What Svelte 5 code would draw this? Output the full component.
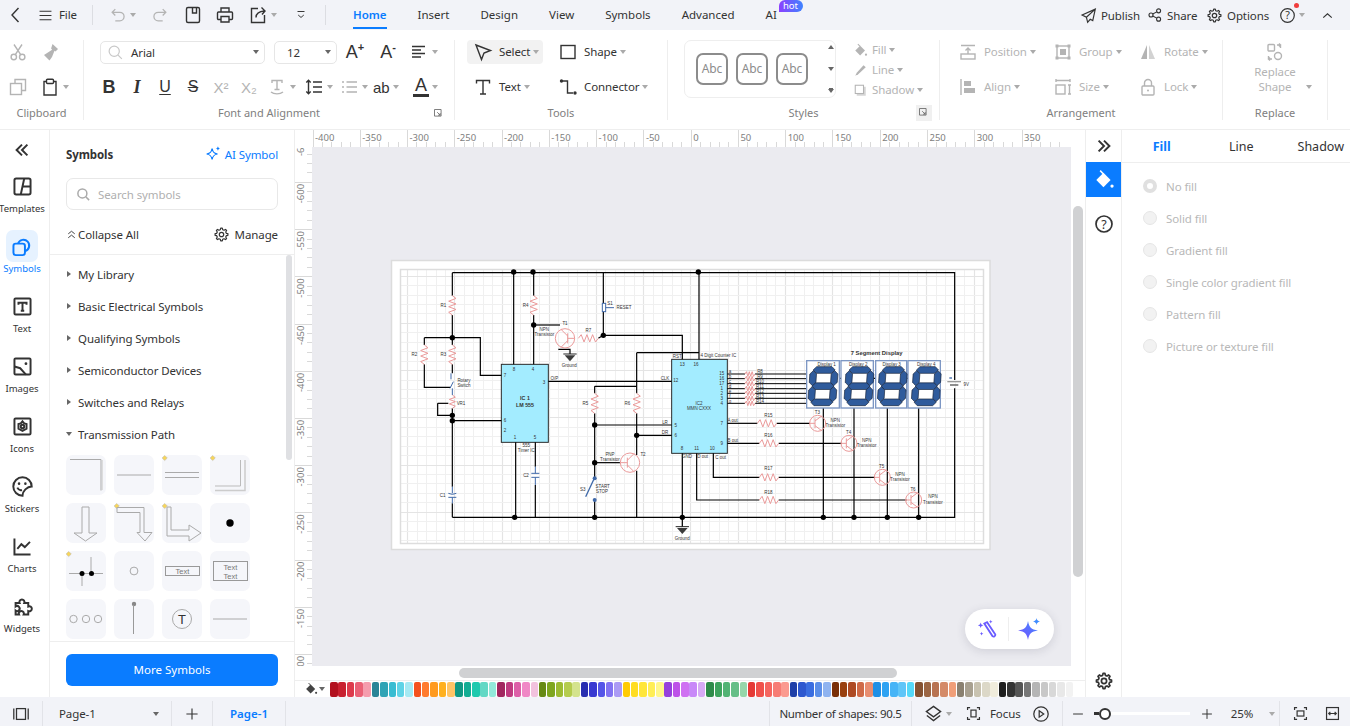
<script>
  function gearPath(R = 7.6, r = 5.8, n = 8) {
    const pts = [];
    for (let i = 0; i < n; i++) {
      const a = (i / n) * Math.PI * 2;
      const w = Math.PI / n;
      for (const [rad, off] of [[r, -w * 0.62], [R, -w * 0.32], [R, w * 0.32], [r, w * 0.62]]) {
        pts.push((10 + rad * Math.cos(a + off)).toFixed(2) + ' ' + (10 + rad * Math.sin(a + off)).toFixed(2));
      }
    }
    return 'M' + pts.join('L') + 'Z';
  }
  const gearIcon = `<path d="${gearPath()}" stroke-linejoin="round"/><circle cx="10" cy="10" r="2.6"/>`;
  const F = 'fill="currentColor" stroke="none"';

  const I = {
    back: '<path d="M12.5 3 6 10l6.5 7"/>',
    menu: '<path d="M3 5h14M3 10h14M3 15h14"/>',
    undo: '<path d="M7 3.5 3.5 7 7 10.5M3.5 7H12a4.7 4.7 0 0 1 0 9.5H7"/>',
    redo: '<path d="M13 3.5 16.5 7 13 10.5M16.5 7H8a4.7 4.7 0 0 0 0 9.5h5"/>',
    save: '<path d="M5 2.5h10A1.5 1.5 0 0 1 16.500 4v12a1.500 1.500 0 0 1-1.500 1.500H5A1.500 1.500 0 0 1 3.500 16V4A1.500 1.500 0 0 1 5 2.500z"/><path d="M9.500 2.500v5.500h4V2.500"/>',
    print: '<path d="M6 7V3h8v4M6 14.500H3.500a1 1 0 0 1-1-1V8a1 1 0 0 1 1-1h13a1 1 0 0 1 1 1v5.500a1 1 0 0 1-1 1H14M6 11.500h8V17H6z"/>',
    export: '<path d="M10 3.500H3.500v14h13V10"/><path d="M8 12.500C8 8.500 10.500 6.500 16.500 6M13.500 2.500l3.500 3.500-3 3.500"/>',
    fold: '<path d="M5 5h10M6 10l4 3.500 4-3.500"/>',
    publish: '<path d="M18 2.500 2.500 9.500l5 2.500 1.500 6 3-3.500 3 1.500zM18 2.500 7.500 12"/>',
    share: '<circle cx="5" cy="10" r="2.500"/><circle cx="14.500" cy="4.800" r="2.500"/><circle cx="14.500" cy="15.200" r="2.500"/><path d="M7.200 8.800l5-2.700M7.200 11.200l5 2.700"/>',
    gear: gearIcon,
    help: `<circle cx="10" cy="10" r="8"/><text x="10" y="14.500" text-anchor="middle" font-size="12.500" ${F}>?</text>`,
    up: '<path d="M5 12.500 10 8l5 4.500"/>',
    cut: '<circle cx="5.800" cy="15" r="2.700"/><circle cx="14.200" cy="15" r="2.700"/><path d="M7.300 12.700 14 2.500M12.700 12.700 6 2.500"/>',
    painter: `<path ${F} d="M12.500 2l5.500 5-2.500 2.500-1-.8L12 15l-2.500 3.500L4 13l3.500-2.200 4.600-3-1-1.200z"/>`,
    copy: '<path d="M7 6V2.500h10.500v11H14"/><rect x="2.500" y="6.500" width="11" height="11"/>',
    paste: '<path d="M6.500 4.500H4v13.500h12V4.500h-2.500"/><rect x="6.500" y="2.300" width="7" height="4.200" rx="1"/>',
    search: '<circle cx="8.500" cy="8.500" r="6"/><path d="M13 13l4.500 4.500"/>',
    align: '<path d="M3 4.500h13M3 8h9M3 11.500h13M3 15h9"/>',
    tt: '<path d="M5 6V3.500h10V6M10 3.500v9M7.500 12.500h5M4 15c3 2.500 9 2.500 12 0"/>',
    spacing: '<path d="M4.500 3.500v13M2.300 5.500l2.200-2.200 2.200 2.200M2.300 14.500l2.200 2.200 2.200-2.200M9 5h9M9 10h9M9 15h9" />',
    list: '<path d="M3 5h2M3 10h2M3 15h2M7.500 5H18M7.500 10H18M7.500 15H18"/>',
    arrow: '<path d="M3 3l14.500 5.500-6.500 2.500-2.500 6.500z"/>',
    rect: '<rect x="3" y="3.500" width="14" height="13"/>',
    textT: '<path d="M3.500 6.500V3.500h13v3M10 3.500v13.500M7 17h6"/>',
    conn: `<circle cx="3.500" cy="4" r="1.700" ${F}/><circle cx="17" cy="16" r="1.700" ${F}/><path d="M5 4h4.500v12H15"/>`,
    launcher: '<path d="M2.500 2.500h11v11h-11z"/><path d="M7 7l5 5M12 8.500V12H8.500"/>',
    bucket: `<path d="M3 10 9.500 3.500 16 10 9.500 16.500z" ${F}/><path d="M6.500 1.500l3 3"/><circle cx="17.300" cy="15.500" r="1.500" ${F}/>`,
    pencil: `<path d="M3 17l2-4L14 3l3 2.500L7 15z" ${F}/>`,
    shadow: `<rect x="5" y="5" width="12" height="12" ${F} opacity=".55"/><rect x="3" y="3" width="11" height="11" fill="#fff"/>`,
    position: `<path d="M3 3.500h14M10 12V6M7.500 8.500 10 6l2.500 2.500"/><rect x="3" y="12" width="14" height="5"/>`,
    group: `<rect x="4" y="4" width="12" height="12"/><rect x="2.500" y="2.500" width="3" height="3" ${F}/><rect x="14.500" y="2.500" width="3" height="3" ${F}/><rect x="2.500" y="14.500" width="3" height="3" ${F}/><rect x="14.500" y="14.500" width="3" height="3" ${F}/><rect x="7" y="7" width="6" height="6" ${F}/>`,
    rotate: `<path d="M9 3v14H3z" ${F}/><path d="M11 3v14h6z" ${F} opacity=".6"/>`,
    alignL: `<path d="M3 2v16"/><rect x="6" y="4" width="7" height="5" ${F}/><rect x="6" y="11" width="11" height="5" ${F}/>`,
    size: '<path d="M3 3.500h14M3 2v3M17 2v3"/><rect x="3" y="8" width="9" height="9"/><path d="M15 8h3M15 17h3M16.500 8v9"/>',
    lock: `<rect x="4" y="9" width="12" height="9" rx="1"/><path d="M6.500 9V6a3.500 3.500 0 0 1 7 0v3"/><circle cx="10" cy="13.500" r="1" ${F}/>`,
    replace: '<rect x="3" y="2.500" width="6.500" height="6.500" rx="1"/><circle cx="13" cy="14" r="3.500"/><path d="M12 3h3.500v3M14 1.500l1.500 1.500-1.500 1.500M7 17H3.500v-3M5 18.500 3.500 17 5 15.500"/>',
    templates: '<rect x="3" y="3" width="14" height="14" rx="1.500"/><path d="M11.500 3 8.500 17M10 10h7"/>',
    symbols: '<rect x="3" y="7.500" width="10" height="10" rx="2"/><path d="M7 7.500a5 5 0 1 1 6 6.500"/>',
    textBox: `<rect x="3" y="3" width="14" height="14" rx="1"/><path d="M6.500 8.500V6.700h7v1.800M10 6.700v7M8.500 13.700h3"/>`,
    images: `<rect x="3" y="3" width="14" height="14" rx="1"/><path d="M3 10l5 1.500 5 5.500"/><circle cx="13" cy="7.500" r="1.200" ${F}/>`,
    iconsI: '<rect x="3" y="3" width="14" height="14" rx="1"/><path d="M10 5.500l1.500 1.800 2 .5v4l-3.500 2-3.500-2v-4l2-.5z"/><circle cx="10" cy="10" r="1.500"/>',
    stickers: `<path d="M18 10a8 8 0 1 0-8 8c0-4 4-8 8-8z"/><path d="M5.500 11c1 2 2.500 2.500 4 2"/><circle cx="7" cy="7.500" r="1.100" ${F}/><circle cx="12.500" cy="7.500" r="1.100" ${F}/>`,
    charts: '<path d="M3 3v14h14M5.500 12l3.500-4 3 2.500 4.500-4.500"/>',
    widgets: '<path d="M4 7h3.500a2.200 2.200 0 1 1 4 0H15v3a2.200 2.200 0 1 1 0 4v3h-4a2.200 2.200 0 1 0-4 0H4v-3.500a2.200 2.200 0 1 0 0-3.500z"/>',
    dbl: '<path d="M10 4 4 10l6 6M16 4l-6 6 6 6"/>',
    dblR: '<path d="M4 4l6 6-6 6M10 4l6 6-6 6"/>',
    dblUp: '<path d="M5 9l5-4 5 4M5 15l5-4 5 4"/>',
    aiStar: `<path d="M9 4c.8 4 2 5.200 6 6-4 .8-5.200 2-6 6-.8-4-2-5.200-6-6 4-.8 5.200-2 6-6z"/><path d="M15.500 1.500c.3 1.500.8 2 2.500 2.500-1.700.500-2.200 1-2.500 2.500-.3-1.500-.8-2-2.500-2.500 1.700-.5 2.200-1 2.500-2.500z" ${F}/>`,
    sidebar: '<path d="M2 4v12M18 4v12"/><rect x="5" y="4" width="10" height="12"/>',
    plus: '<path d="M3 10h14M10 3v14"/>',
    layers: '<path d="M10 2.500 17.500 8 10 13.500 2.500 8zM3 12l7 5.500 7-5.500"/>',
    focus: '<path d="M3 6V3h3M14 3h3v3M17 14v3h-3M6 17H3v-3"/><rect x="7" y="6" width="6" height="8"/>',
    play: '<circle cx="10" cy="10" r="8"/><path d="M8 6.500 13 10l-5 3.500z"/>',
    minus: '<path d="M3 10h14"/>',
    fit: '<path d="M3 6V3h3M14 3h3v3M17 14v3h-3M6 17H3v-3"/><rect x="6" y="7" width="8" height="6"/>',
    width: '<rect x="3" y="3" width="14" height="14"/><path d="M6 10h8M7.500 8 5.500 10l2 2M12.500 8l2 2-2 2"/>'
  };

  const topLeft = [
    { icon: 'back', w: 31, size: 20, cls: 'dark' },
    { icon: 'menu', w: 28, size: 17, cls: 'dark' },
    { label: 'File', w: 33, pl: 0, cls: 'dark' }
  ];
  const topMid = [
    { icon: 'undo', w: 52, pl: 16, caret: true, size: 18, cls: 'mute' },
    { icon: 'redo', w: 30, size: 18, cls: 'mute' },
    { icon: 'save', w: 36, size: 20, cls: 'dark' },
    { icon: 'print', w: 28, size: 20, cls: 'dark' },
    { icon: 'export', w: 42, pl: 9, caret: true, size: 20, cls: 'dark' },
    { icon: 'fold', w: 39, size: 14, cls: 'dark' }
  ];
  const tabs = ['Home', 'Insert', 'Design', 'View', 'Symbols', 'Advanced', 'AI'];

  const clip1 = [
    { icon: 'cut', w: 32, cls: 'mute' },
    { icon: 'painter', w: 32, cls: 'mute' }
  ];
  const clip2 = [
    { icon: 'copy', w: 32, cls: 'mute' },
    { icon: 'paste', w: 38, pl: 6, caret: true, cls: 'dark' }
  ];
  const font1 = [
    { txt: 'A', sup: '+', w: 36, txtCls: 'big', cls: 'dark' },
    { txt: 'A', sup: '-', w: 30, txtCls: 'big', cls: 'dark' },
    { icon: 'align', w: 40, pl: 6, caret: true, cls: 'dark' }
  ];
  const font2 = [
    { txt: 'B', w: 28, txtCls: 'big bold', cls: 'dark' },
    { txt: 'I', w: 28, txtCls: 'big ital', cls: 'dark' },
    { txt: 'U', w: 28, txtCls: 'big under', cls: 'dark' },
    { txt: 'S', w: 28, txtCls: 'big strike', cls: 'dark' },
    { txt: 'X²', w: 28, txtCls: 'mid', cls: 'mute' },
    { txt: 'X₂', w: 28, txtCls: 'mid', cls: 'mute' },
    { icon: 'tt', w: 34, pl: 4, caret: true, cls: 'mute' },
    { icon: 'spacing', w: 36, pl: 7, caret: true, cls: 'dark' },
    { icon: 'list', w: 33, pl: 6, caret: true, cls: 'mute' },
    { txt: 'ab', w: 37, pl: 7, caret: true, txtCls: 'mid', cls: 'dark' },
    { txt: 'A', w: 40, pl: 10, caret: true, txtCls: 'big bar', cls: 'dark' }
  ];
  const tools1 = [
    { icon: 'arrow', label: 'Select', w: 76, pl: 6, caret: true, cls: 'dark sel' },
    { icon: 'rect', label: 'Shape', w: 96, pl: 6, caret: true, cls: 'dark gapl' }
  ];
  const tools2 = [
    { icon: 'textT', label: 'Text', w: 76, pl: 6, caret: true, cls: 'dark' },
    { icon: 'conn', label: 'Connector', w: 108, pl: 6, caret: true, cls: 'dark gapl' }
  ];
  const styleCol = [
    { icon: 'bucket', label: 'Fill', size: 15 },
    { icon: 'pencil', label: 'Line', size: 15 },
    { icon: 'shadow', label: 'Shadow', size: 15 }
  ];
  const arr1 = [
    { icon: 'position', label: 'Position', w: 95, pl: 0, caret: true, cls: 'mute' },
    { icon: 'group', label: 'Group', w: 85, pl: 0, caret: true, cls: 'mute' },
    { icon: 'rotate', label: 'Rotate', w: 85, pl: 0, caret: true, cls: 'mute' }
  ];
  const arr2 = [
    { icon: 'alignL', label: 'Align', w: 95, pl: 0, caret: true, cls: 'mute' },
    { icon: 'size', label: 'Size', w: 85, pl: 0, caret: true, cls: 'mute' },
    { icon: 'lock', label: 'Lock', w: 85, pl: 0, caret: true, cls: 'mute' }
  ];

  const rail = [
    ['templates', 'Templates'], ['symbols', 'Symbols'], ['textBox', 'Text'], ['images', 'Images'],
    ['iconsI', 'Icons'], ['stickers', 'Stickers'], ['charts', 'Charts'], ['widgets', 'Widgets']
  ];
  const libs = ['My Library', 'Basic Electrical Symbols', 'Qualifying Symbols', 'Semiconductor Devices', 'Switches and Relays'];

  const D = (x = 2.7, y = 3) => `<path d="M${x} ${y - 2.6}L${x + 2.6} ${y}L${x} ${y + 2.6}L${x - 2.6} ${y}z" fill="#f6d55c" stroke="#b5b5b5" stroke-width=".5"/>`;
  const tiles = [
    '<path d="M4 4.500h31v31" stroke="#aaa"/><path d="M36.500 5v30" stroke="#ddd"/>',
    '<path d="M3 20h34" stroke="#aaa"/>',
    D() + '<path d="M3 17.500h34M3 22.500h34" stroke="#aaa"/>',
    D() + '<path d="M5 35.500h30V5" stroke="#ccc" stroke-width="1.500"/><path d="M5 31h25.500V5" stroke="#bbb"/>',
    '<path d="M16 4h7v26h8L19.500 38 8 30h8z" stroke="#aaa"/>',
    D() + '<path d="M3 4.500h27v25h8L31 38 23 29.500h3V9.500H3z" stroke="#aaa"/>',
    D() + '<path d="M5 4h4v23h18v-5l12 8-12 8v-5H5z" stroke="#aaa"/>',
    '<circle cx="20" cy="20" r="3.700" fill="#000"/>',
    D() + '<path d="M3 22.500h34M25 6v17M16 22v13" stroke="#aaa"/><circle cx="16" cy="22.500" r="2.500" fill="#000"/><circle cx="25.500" cy="22.500" r="2.500" fill="#000"/>',
    '<circle cx="20" cy="20" r="3.900" stroke="#aaa"/>',
    '<rect x="3.500" y="15.500" width="34" height="9" stroke="#999"/><text x="20.500" y="23" text-anchor="middle" font-size="7.500" fill="#777">Text</text>',
    '<rect x="3.500" y="10.500" width="34" height="19" stroke="#999"/><text x="20.500" y="18.500" text-anchor="middle" font-size="7.500" fill="#777">Text</text><text x="20.500" y="27.500" text-anchor="middle" font-size="7.500" fill="#777">Text</text>',
    '<circle cx="7.500" cy="20" r="3.700" stroke="#aaa"/><circle cx="20" cy="20" r="3.700" stroke="#aaa"/><circle cx="32" cy="20" r="3.700" stroke="#aaa"/>',
    '<circle cx="20" cy="5" r="2.200" fill="#888"/><path d="M19.500 6v29" stroke="#999"/>',
    '<circle cx="20" cy="20" r="9.500" stroke="#aaa"/><text x="20" y="25" text-anchor="middle" font-size="13" fill="#333">T</text>',
    '<path d="M3 20h34" stroke="#aaa"/>'
  ];

  const radios = ['No fill', 'Solid fill', 'Gradient fill', 'Single color gradient fill', 'Pattern fill', 'Picture or texture fill'];

  const colors = [
    '#b2101e','#c8202f','#dd3a4c','#ea6176','#f59cad',
    '#2a8497','#2fa3b5','#38bcd2','#5fd3e6','#a5e9f3',
    '#f4511e','#ff7a2e','#ff9a1f','#ffb01f','#ffc466',
    '#0f9883','#12ad94','#1ec9ae','#62d8c5','#93e8da',
    '#a1265f','#bf3a80','#dd5fa8','#f088c6','#f2c2de',
    '#678a14','#7fa61f','#9dbb32','#b5cc4e','#d4e38d',
    '#282db0','#3838d1','#5454e8','#8272f2','#ab9af5',
    '#ffcb05','#ffdd22','#ffe63a','#ffee55','#fff78a',
    '#9640dc','#bd52e8','#cf70f2','#c888f8','#d6aaf5',
    '#2e8b4a','#3ea35e','#52b374','#66bf88','#96d6aa',
    '#e53935','#f0504a','#f5655f','#f77c75','#fb9a90',
    '#1f3fa8','#2d57cf','#3a6de0','#5b8ee8','#8fb3f0',
    '#7a2f08','#99400f','#ae4a24','#cf6a48','#e88d70',
    '#1f8fe5','#2ea2f2','#46b4f7','#5fc5f8','#55d8f8',
    '#855232','#9c6644','#b87352','#d48a68','#f09e78',
    '#8a8070','#a8a090','#c8c2b0','#dcd8c8','#f0ecdc',
    '#1e1e1e','#333333','#555555','#777777','#b5b5b5','#c8c8c8','#d8d8d8','#e8e8e8','#f2f2f2','#ffffff'
  ];

  const TICK = 47.27;
  const topMajors = Array.from({ length: 16 }, (_, i) => ({ x: 0.5 + i * TICK, v: -400 + 50 * i }));
  const topMinors = [];
  for (let i = 0; i < 16; i++) for (let k = 1; k < 5; k++) topMinors.push(0.5 + i * TICK + k * TICK / 5);
  const leftMajors = Array.from({ length: 12 }, (_, i) => ({ y: -12.3 + i * 47.2, v: -650 + 50 * i }));
  const leftMinors = [];
  for (let i = 0; i < 12; i++) for (let k = 1; k < 5; k++) leftMinors.push(-12.3 + i * 47.2 + k * 47.2 / 5);

  /* page grid, in screen pixels */
  const GX0 = 400.5, GX1 = 983.5, GY0 = 269.5, GY1 = 543.5, G = 9.44;
  const vLines = [], hLines = [];
  for (let i = -1; i < 63; i++) {
    const x = 407.2 + i * G;
    if (x > GX0 && x < GX1) vLines.push({ p: Math.round(x) + 0.5, m: (i % 5 + 5) % 5 === 0 });
  }
  for (let i = -1; i < 30; i++) {
    const y = 275.7 + i * G;
    if (y > GY0 && y < GY1) hLines.push({ p: Math.round(y) + 0.5, m: (i % 5 + 5) % 5 === 0 });
  }

  /* circuit, drawn in a 3x space with its origin at (390,260) */
  const wires = [
    'M187 38H1694V360', 'M1694 385V772H187', 'M187 38V107', 'M187 165V233', 'M103 233H271V346H334', 'M103 233V255',
    'M103 313V382H182', 'M187 233V255', 'M187 313V340', 'M187 445V482', 'M143 430H175', 'M143 430V466H187', 'M187 482H334',
    'M187 482V680', 'M187 730V772', 'M371 38V313', 'M431 38V107', 'M431 165V313', 'M431 195H510', 'M377 547V772',
    'M436 547V620', 'M436 675V772', 'M505 268H540V282', 'M625 235L640 226', 'M640 38V130', 'M640 155V226H877V298',
    'M740 278H927', 'M927 38V298', 'M740 278V400', 'M740 460V585', 'M740 632V772', 'M614 379H740', 'M614 379V400',
    'M614 460V655', 'M614 720V772', 'M614 495H845', 'M740 526H845', 'M614 608H690', 'M475 364H845', 'M877 580V800',
    'M920 580V720H1108', 'M1166 720H1550', 'M970 580V652H1108', 'M1166 652H1455', 'M1012 490H1102', 'M1160 490H1260',
    'M1012 550H1108', 'M1166 550H1355', 'M1300 437V772', 'M1392 437V772', 'M1492 437V772', 'M1586 437V772',
    'M1345 355H1365', 'M1448 355H1467', 'M1548 355H1567'
  ];
  const dots = [
    [371,36],[429,36],[925,36],[187,233],[187,466],[187,482],[431,195],[640,226],[614,495],[614,608],[740,526],
    [374,772],[614,772],[877,772],[1300,772],[1392,772],[1492,772],[1586,772]
  ];
  const pinY = [342,356,371,386,400,415,430];

  function zigV(x, a, b, amp = 11, n = 6) {
    const s = (b - a) / (n + 1);
    let d = `M${x} ${a}`;
    for (let i = 1; i <= n; i++) d += `L${x + (i % 2 ? amp : -amp)} ${a + s * i}`;
    return d + `L${x} ${b}`;
  }
  function zigH(a, b, y, amp = 11, n = 6) {
    const s = (b - a) / (n + 1);
    let d = `M${a} ${y}`;
    for (let i = 1; i <= n; i++) d += `L${a + s * i} ${y + (i % 2 ? -amp : amp)}`;
    return d + `L${b} ${y}`;
  }
  const resistors = [
    zigV(187,107,165), zigV(431,107,165), zigV(103,255,313), zigV(187,255,313), zigV(187,405,445,9,5),
    zigV(614,400,460), zigV(740,400,460), zigH(565,625,235), zigH(1102,1160,490), zigH(1108,1166,550),
    zigH(1108,1166,652), zigH(1108,1166,720), ...pinY.map((y) => zigH(1065,1095,y,7))
  ];
  const transistors = [
    { x: 525, y: 235, r: 29, d: -1 }, { x: 720, y: 608, r: 29, d: 1 }, { x: 1283, y: 490, r: 24, d: 1 },
    { x: 1377, y: 550, r: 24, d: 1 }, { x: 1477, y: 652, r: 24, d: 1 }, { x: 1571, y: 720, r: 24, d: 1 }
  ];
  const grounds = [[540,282],[877,800]];

  const labels = [
    [160,137,'R1'],[407,137,'R4'],[73,284,'R2'],[160,284,'R3'],[222,363,'Rotary'],[222,378,'Switch'],[213,431,'VR1'],[158,707,'C1'],
    [372,329,'8'],[429,329,'4'],[345,347,'7'],[462,368,'3'],[345,482,'6'],[345,512,'2'],[375,534,'1'],[435,534,'5'],
    [409,557,'555'],[409,573,'Timer IC'],[408,648,'C2'],[525,191,'T1'],[463,209,'NPN'],[463,225,'Transistor'],[595,212,'R7'],
    [538,317,'Ground'],[660,131,'S1'],[702,144,'RESET'],[493,356,'O/P'],[825,356,'CLK'],[586,431,'R5'],[712,431,'R6'],
    [825,488,'LR'],[825,518,'DR'],[660,583,'PNP'],[660,600,'Transistor'],[759,584,'T2'],[578,689,'S3'],[638,681,'START'],[636,696,'STOP'],
    [862,290,'RST'],[877,314,'13'],[918,314,'16'],[857,362,'12'],[857,497,'5'],[857,527,'6'],[876,566,'8'],[920,566,'11'],[967,566,'10'],
    [891,591,'GND'],[938,591,'D out'],[992,594,'C out'],[877,836,'Ground'],[985,288,'4 Digit Counter IC'],
    [995,341,'15'],[995,356,'16'],[995,371,'17'],[995,386,'1'],[995,401,'2'],[995,416,'3'],[995,431,'4'],[995,491,'7'],[995,551,'9'],
    [1028,481,'A out'],[1028,543,'B out'],
    [1020,336,'a'],[1020,351,'b'],[1020,366,'c'],[1020,381,'d'],[1020,396,'e'],[1020,411,'f'],[1020,426,'g'],
    [1110,335,'R8'],[1110,350,'R9'],[1110,365,'R10'],[1110,380,'R11'],[1110,395,'R12'],[1110,410,'R13'],[1110,425,'R14'],
    [1135,467,'R15'],[1135,527,'R16'],[1135,625,'R17'],[1135,698,'R18'],
    [1282,458,'T3'],[1336,481,'NPN'],[1336,497,'Transistor'],[1376,517,'T4'],[1430,541,'NPN'],[1430,557,'Transistor'],
    [1475,620,'T5'],[1530,643,'NPN'],[1530,659,'Transistor'],[1569,688,'T6'],[1629,711,'NPN'],[1629,728,'Transistor'],[1729,374,'9V'],
    [1310,314,'Display 1'],[1405,314,'Display 2'],[1505,314,'Display 3'],[1609,314,'Display 4']
  ];
  const displays = [[1250,1348],[1353,1450],[1457,1550],[1554,1651]];
  const digits = [1257,1365,1465,1567];
  const segW = 84, segT = 20;
  function hSeg(x0, y0, yc) {
    const a = x0 + 9, b = x0 + segW - 9, h = segT / 2;
    return `${a},${y0 + yc} ${a + h},${y0 + yc - h} ${b - h},${y0 + yc - h} ${b},${y0 + yc} ${b - h},${y0 + yc + h} ${a + h},${y0 + yc + h}`;
  }
  function vSeg(x0, y0, xc, a0, b0) {
    const h = segT / 2, X = x0 + xc, a = y0 + a0, b = y0 + b0;
    return `${X},${a} ${X + h},${a + h} ${X + h},${b - h} ${X},${b} ${X - h},${b - h} ${X - h},${a + h}`;
  }
  function digitSegs(x0) {
    const y0 = 320;
    return [
      hSeg(x0, y0, 10), hSeg(x0, y0, 58.5), hSeg(x0, y0, 107),
      vSeg(x0, y0, 10, 12, 57), vSeg(x0, y0, segW - 10, 12, 57),
      vSeg(x0, y0, 10, 60, 105), vSeg(x0, y0, segW - 10, 60, 105)
    ];
  }
</script>

{#snippet ic(name, size = 20, cls = '')}
  <svg class="ic {cls}" viewBox="0 0 20 20" width={size} height={size}>{@html I[name]}</svg>
{/snippet}

{#snippet tool(it)}
  <div class="tool {it.cls || ''}" class:start={it.pl !== undefined} style:width="{it.w}px" style:padding-left={it.pl !== undefined ? it.pl + 'px' : null}>
    {#if it.icon}{@render ic(it.icon, it.size || 20)}{/if}
    {#if it.txt}<span class="glyph {it.txtCls || ''}">{it.txt}{#if it.sup}<sup>{it.sup}</sup>{/if}</span>{/if}
    {#if it.label}<span class="tl" class:wicon={it.icon}>{it.label}</span>{/if}
    {#if it.caret}<i class="caret"></i>{/if}
  </div>
{/snippet}

{#snippet glabel(text)}
  <div class="glabel">{text}</div>
{/snippet}

<div class="app">
  <header class="topbar">
    {#each topLeft as it}{@render tool(it)}{/each}
    <i class="vsep"></i>
    {#each topMid as it}{@render tool(it)}{/each}
    <i class="vsep sep2"></i>
    <nav class="tabs">
      {#each tabs as t, i}
        <div class="tab" class:on={i === 0}>
          {t}
          {#if t === 'AI'}<span class="hot">hot</span>{/if}
        </div>
      {/each}
    </nav>
    <div class="topright">
      <div class="tr w-pub">{@render ic('publish', 17)}<span>Publish</span></div>
      <div class="tr w-sha">{@render ic('share', 16)}<span>Share</span></div>
      <div class="tr w-opt">{@render ic('gear', 17)}<span>Options</span></div>
      <div class="tr w-hlp">{@render ic('help', 17)}<i class="caret"></i><b class="reddot"></b></div>
      <div class="tr w-up">{@render ic('up', 17)}</div>
    </div>
  </header>

  <section class="ribbon">
    <div class="group g1">
      <div class="rows">
        <div class="row">{#each clip1 as it}{@render tool(it)}{/each}</div>
        <div class="row">{#each clip2 as it}{@render tool(it)}{/each}</div>
      </div>
      {@render glabel('Clipboard')}
    </div>

    <div class="group g2">
      <div class="rows">
        <div class="row r-f1">
          <div class="select fontsel">
            {@render ic('search', 17, 'faint')}
            <span class="selv">Arial</span>
            <i class="caret dk"></i>
          </div>
          <div class="select sizesel">
            <span>12</span>
            <i class="caret dk"></i>
          </div>
          {#each font1 as it}{@render tool(it)}{/each}
        </div>
        <div class="row r-f2">{#each font2 as it}{@render tool(it)}{/each}</div>
      </div>
      {@render glabel('Font and Alignment')}
      <span class="launch">{@render ic('launcher', 12)}</span>
    </div>

    <div class="group g3">
      <div class="rows">
        <div class="row">{#each tools1 as it}{@render tool(it)}{/each}</div>
        <div class="row">{#each tools2 as it}{@render tool(it)}{/each}</div>
      </div>
      {@render glabel('Tools')}
    </div>

    <div class="group g4">
      <div class="stylesbody">
        <div class="abcbox">
          <span class="abc">Abc</span><span class="abc">Abc</span><span class="abc">Abc</span>
          <div class="abcscroll"><i class="up3"></i><i class="dn3"></i><i class="dn3 bar3"></i></div>
        </div>
        <div class="stylecol">
          {#each styleCol as s}
            <div class="scitem">{@render ic(s.icon, s.size)}<span>{s.label}</span><i class="caret"></i></div>
          {/each}
        </div>
      </div>
      {@render glabel('Styles')}
      <span class="launch boxed">{@render ic('launcher', 12)}</span>
    </div>

    <div class="group g5">
      <div class="rows">
        <div class="row">{#each arr1 as it}{@render tool(it)}{/each}</div>
        <div class="row">{#each arr2 as it}{@render tool(it)}{/each}</div>
      </div>
      {@render glabel('Arrangement')}
    </div>

    <div class="group g6">
      <div class="replace">
        {@render ic('replace', 20)}
        <span class="rt">Replace</span>
        <span class="rt">Shape<i class="caret far"></i></span>
      </div>
      {@render glabel('Replace')}
    </div>
    <div class="group g7"></div>
  </section>

  <main class="main">
    <aside class="rail">
      <div class="railtop">{@render ic('dbl', 18, 'heavy')}</div>
      {#each rail as [icon, label]}
        <div class="railitem" class:active={label === 'Symbols'}>
          <div class="railicon">{@render ic(icon, 23, 'thick')}</div>
          <span>{label}</span>
        </div>
      {/each}
    </aside>

    <aside class="panel">
      <div class="phead">
        <b>Symbols</b>
        <span class="ai">{@render ic('aiStar', 18)}AI Symbol</span>
      </div>
      <div class="psearch">{@render ic('search', 15, 'faint2')}<span>Search symbols</span></div>
      <div class="pcollapse">
        <span class="pc">{@render ic('dblUp', 13)}Collapse All</span>
        <span class="pc">{@render ic('gear', 17)}<span class="mg">Manage</span></span>
      </div>
      <div class="plist">
        {#each libs as l}
          <div class="lib"><i class="tri"></i>{l}</div>
        {/each}
        <div class="lib"><i class="tri open"></i>Transmission Path</div>
        <div class="tilegrid">
          {#each tiles as t}
            <div class="tile"><svg class="tilesvg" viewBox="0 0 40 40" width="40" height="40">{@html t}</svg></div>
          {/each}
        </div>
        <i class="pscroll"></i>
      </div>
      <div class="pfoot"><div class="morebtn">More Symbols</div></div>
    </aside>

    <div class="work">
      <div class="rulers">
        <div class="corner"></div>
        <svg class="rtop" width="759" height="17">
          {#each topMinors as x}<line x1={Math.round(x) + 0.5} x2={Math.round(x) + 0.5} y1="12" y2="17" class="tk" />{/each}
          {#each topMajors as m}
            <line x1={Math.round(m.x) + 0.5} x2={Math.round(m.x) + 0.5} y1="0" y2="17" class="tk" />
            <text x={m.x + 2.5} y="10.500" class="rt-txt">{m.v}</text>
          {/each}
        </svg>
        <div class="blank"></div>

        <svg class="rleft" width="17" height="519">
          {#each leftMinors as y}<line x1="12" x2="17" y1={Math.round(y) + 0.5} y2={Math.round(y) + 0.5} class="tk" />{/each}
          {#each leftMajors as m}
            <line x1="0" x2="17" y1={Math.round(m.y) + 0.5} y2={Math.round(m.y) + 0.5} class="tk" />
            <text transform="translate(8.500 {m.y + 2}) rotate(-90)" text-anchor="end" class="rt-txt">{m.v}</text>
          {/each}
        </svg>

        <div class="canvas">
          <svg class="sheet" viewBox="312 147 759 519" width="759" height="519">
            <rect x="391.500" y="260.500" width="598.500" height="289" fill="#fff" stroke="#dcdcdc" stroke-width="1.500" />
            <g class="gridl">
              {#each vLines as l}<line x1={l.p} x2={l.p} y1={GY0} y2={GY1} class:maj={l.m} />{/each}
              {#each hLines as l}<line y1={l.p} y2={l.p} x1={GX0} x2={GX1} class:maj={l.m} />{/each}
              <rect x={GX0} y={GY0} width={GX1 - GX0} height={GY1 - GY0} class="gbox" />
            </g>
            <g transform="translate(390 260) scale(.33333)">
              <rect x="334" y="313" width="141" height="234" class="chip" />
              <rect x="845" y="298" width="167" height="282" class="chip" />
              {#each wires as d}<path {d} class="wire" />{/each}
              {#each pinY as y}
                <path d="M1012 {y}H1065M1095 {y}H1262" class="wire thin" />
              {/each}
              {#each resistors as d}<path {d} class="res" />{/each}
              {#each dots as [x, y]}<circle cx={x} cy={y} r="8" class="dot" />{/each}
              {#each transistors as t}
                <circle cx={t.x} cy={t.y} r={t.r} class="res" />
                <path d="M{t.x - t.d * 8} {t.y - 15}V{t.y + 15}M{t.x - t.d * t.r} {t.y}H{t.x - t.d * 8}M{t.x - t.d * 8} {t.y - 7}L{t.x + t.d * 12} {t.y - t.r + 2}M{t.x - t.d * 8} {t.y + 7}L{t.x + t.d * 12} {t.y + t.r - 2}" class="res" />
              {/each}
              {#each grounds as [x, y]}
                <path d="M{x - 20} {y}H{x + 20}" class="gnd" />
                <path d="M{x - 16} {y + 4}H{x + 16}L{x} {y + 22}z" class="gndf" />
              {/each}
              <path d="M183 340V358M190 365L180 385M187 385V405" class="blue" />
              <rect x="637" y="130" width="10" height="25" class="bluebox" />
              <path d="M647 143H672" class="blue" />
              <path d="M175 700Q187 706 199 700M175 712H199M187 680V700M187 712V730" class="blue" />
              <path d="M424 640H448M424 652H448M436 620V640M436 652V675" class="blue" />
              <path d="M613 655L587 710" class="blue wide" />
              <circle cx="614" cy="655" r="6" class="bluedot" />
              <circle cx="614" cy="720" r="6" class="bluedot" />
              <path d="M1672 365H1713" class="batl" />
              <path d="M1680 375H1705" class="batd" />
              <path d="M1678 354H1686" class="blue wide" />
              {#each displays as [a, b]}
                <rect x={a} y="302" width={b - a} height="142" class="disp" />
              {/each}
              {#each digits as x}
                <g transform="translate({x} 378) skewX(-4) translate({-x} -378)">
                  {#each digitSegs(x) as p}<polygon points={p} class="seg" />{/each}
                </g>
              {/each}
              <text x="1460" y="285" text-anchor="middle" class="t title">7 Segment Display</text>
              {#each labels as [x, y, s]}
                <text {x} y={y + 4} text-anchor="middle" class="t">{s}</text>
              {/each}
              <text x="405" y="421" text-anchor="middle" class="t chipt">IC 1</text>
              <text x="405" y="441" text-anchor="middle" class="t chipt">LM 555</text>
              <text x="927" y="434" text-anchor="middle" class="t">IC2</text>
              <text x="927" y="449" text-anchor="middle" class="t">MMN CXXX</text>
            </g>
          </svg>
          <div class="fab">
            <svg class="fabi" viewBox="0 0 24 24" width="22" height="22">
              <path d="M8 6l3-1.500L20 18a2 2 0 0 1-3 2z" class="fs" />
              <path d="M4 5l.8 2L7 8l-2.200.9L4 11l-.8-2.100L1 8l2.200-1z M15 2l.6 1.500L17 4l-1.400.6L15 6l-.6-1.400L13 4l1.400-.5z M5 15l.6 1.500 1.400.5-1.400.6L5 19l-.6-1.400L3 17l1.400-.5z" class="ff" />
            </svg>
            <i class="fabsep"></i>
            <svg class="fabi" viewBox="0 0 24 24" width="24" height="24">
              <defs><linearGradient id="sg" x1="0" y1="1" x2="1" y2="0"><stop offset="0" stop-color="#7a4dff" /><stop offset="1" stop-color="#3f8cff" /></linearGradient></defs>
              <path d="M10 4c1.200 6.500 3 8.300 10 9.500-7 1.200-8.800 3-10 9.500-1.200-6.500-3-8.300-10-9.500 7-1.200 8.800-3 10-9.500z" fill="url(#sg)" />
              <path d="M18.500 1c.4 2.200 1.100 2.900 3.500 3.500-2.400.6-3.100 1.300-3.500 3.500-.4-2.200-1.100-2.900-3.500-3.500 2.400-.6 3.100-1.300 3.500-3.500z" fill="#3f8cff" />
            </svg>
          </div>
        </div>

        <div class="vtrack"><i class="vthumb"></i></div>

        <div class="corner2"></div>
        <div class="htrack"><i class="hthumb"></i></div>
        <div class="corner2"></div>
      </div>

      <div class="colorbar">
        <div class="cbicon">{@render ic('bucket', 14)}<i class="caret dk"></i></div>
        <div class="swatches">
          {#each colors as c}<i class="sw" style:background={c}></i>{/each}
        </div>
      </div>
    </div>

    <aside class="rrail">
      <div class="rr-top">{@render ic('dblR', 18, 'heavy')}</div>
      <div class="rr-blue">{@render ic('bucket', 22)}</div>
      <div class="rr-help">{@render ic('help', 20, 'thick')}</div>
      <div class="rr-gear">{@render ic('gear', 20, 'thick')}</div>
    </aside>

    <aside class="rpanel">
      <div class="rtabs">
        <span class="on">Fill</span><span>Line</span><span>Shadow</span>
      </div>
      <div class="radios">
        {#each radios as r, i}
          <div class="radio"><i class="dotr" class:sel={i === 0}></i><span>{r}</span></div>
        {/each}
      </div>
    </aside>
  </main>

  <footer class="status">
    <div class="st s-side">{@render ic('sidebar', 18)}</div>
    <div class="st s-page"><span>Page-1</span><i class="caret dk"></i></div>
    <div class="st s-plus">{@render ic('plus', 16)}</div>
    <div class="st s-cur">Page-1</div>
    <div class="st s-num">Number of shapes: 90.5</div>
    <div class="st s-lay">{@render ic('layers', 19)}<i class="caret"></i></div>
    <div class="st s-foc">{@render ic('focus', 17)}</div>
    <div class="st s-foct">Focus</div>
    <div class="st s-play">{@render ic('play', 18)}</div>
    <div class="st s-minus">{@render ic('minus', 14)}</div>
    <div class="st s-slide"><i class="sl-a"></i><i class="sl-k"></i><i class="sl-b"></i></div>
    <div class="st s-plus2">{@render ic('plus', 14)}</div>
    <div class="st s-pct">25%</div>
    <div class="st s-car"><i class="caret"></i></div>
    <div class="st s-fit">{@render ic('fit', 17)}</div>
    <div class="st s-wid">{@render ic('width', 17)}</div>
  </footer>
</div>

<style>
  :global(body) { margin: 0; font-family: "Noto Sans", "Open Sans", sans-serif; font-size: 11.5px; letter-spacing: -0.1px; color: #333; background: #fff; }
  .app { width: 1350px; height: 726px; display: flex; flex-direction: column; overflow: hidden; }
  i { display: block; font-style: normal; }
  .ic { display: block; flex: none; fill: none; stroke: currentColor; stroke-width: 1.4; }
  .ic.thick { stroke-width: 1.7; }
  .ic.heavy { stroke-width: 2.2; }
  .ic.faint { color: #c8c8c8; }
  .ic.faint2 { color: #aaa; stroke-width: 2; }

  .caret { width: 0; height: 0; border: 3px solid transparent; border-top: 4px solid #aaa; border-bottom: 0; margin-left: 3px; flex: none; }
  .caret.dk { border-top-color: #666; }

  /* shared tool cell */
  .tool { display: flex; align-items: center; justify-content: center; height: 24px; flex: none; box-sizing: border-box; }
  .tool.start { justify-content: flex-start; }
  .dark { color: #333; }
  .mute { color: #b4b4b4; }
  .tl { padding-bottom: 2px; }
  .tl.wicon { margin-left: 6px; }
  .sel { background: #f2f2f2; border-radius: 4px; }
  .gapl { margin-left: 9px; }
  .glyph { line-height: 1; font-family: "Liberation Sans", sans-serif; letter-spacing: 0; }
  .glyph sup { font-size: 11px; vertical-align: 7px; line-height: 0; font-weight: 700; }
  .big { font-size: 18px; }
  .mid { font-size: 15px; }
  .bold { font-weight: 700; }
  .ital { font-style: italic; font-family: "Liberation Serif", serif; font-weight: 700; }
  .under { text-decoration: underline; text-underline-offset: 2px; font-size: 16px; }
  .strike { text-decoration: line-through; font-size: 16px; }
  .bar { border-bottom: 3px solid #333; line-height: 17px; padding: 0 2px; }

  /* top bar */
  .topbar { height: 30px; background: #f2f3f8; display: flex; align-items: center; flex: none; }
  .topbar .tool { height: 30px; }
  .vsep { width: 1px; height: 20px; background: #dcdde2; flex: none; }
  .sep2 { margin-left: 5px; }
  .tabs { display: flex; gap: 31px; margin-left: 27px; height: 30px; letter-spacing: 0; }
  .tab { position: relative; line-height: 30px; color: #333; white-space: nowrap; }
  .tab.on { color: #0a7cff; font-weight: 600; }
  .tab.on::after { content: ""; position: absolute; left: 0; right: 0; bottom: 1px; height: 2px; background: #0a7cff; }
  .hot { position: absolute; left: 13px; top: 0; width: 24px; height: 12px; line-height: 12px; text-align: center; font-size: 9.500px; color: #fff; border-radius: 7px 7px 7px 0; background: linear-gradient(90deg, #8c3fff, #3f83ff); }
  .topright { margin-left: auto; display: flex; align-items: center; height: 30px; }
  .tr { display: flex; align-items: center; gap: 4px; flex: none; position: relative; white-space: nowrap; }
  .w-pub { width: 67px; }
  .w-sha { width: 59px; }
  .w-opt { width: 73px; }
  .w-hlp { width: 40px; gap: 0; }
  .w-up { width: 31px; }
  .reddot { position: absolute; left: 15px; top: -4px; width: 5px; height: 5px; border-radius: 50%; background: #f03d3d; }

  /* ribbon */
  .ribbon { height: 100px; box-sizing: border-box; flex: none; display: flex; padding-top: 10px; border-bottom: 1px solid #eeeeee; }
  .group { position: relative; height: 80px; border-right: 1px solid #eeeeee; flex: none; box-sizing: border-box; }
  .g1 { width: 84px; padding-left: 2px; }
  .g2 { width: 371px; }
  .g3 { width: 213px; padding-left: 12px; }
  .g4 { width: 272px; padding-left: 16px; }
  .g5 { width: 283px; padding-left: 18px; }
  .g6 { width: 105px; }
  .g7 { border: 0; width: 10px; }
  .rows { display: flex; flex-direction: column; gap: 11px; height: 59px; }
  .row { display: flex; align-items: center; height: 24px; }
  .r-f1 { padding-left: 16px; }
  .r-f2 { padding-left: 11px; }
  .glabel { position: absolute; left: 0; right: 0; top: 66px; text-align: center; color: #808080; font-size: 11px; line-height: 14px; letter-spacing: 0; }
  .launch { position: absolute; right: 9px; top: 68px; color: #666; }
  .launch.boxed { right: 7px; top: 65px; background: #f0f0f0; padding: 2px; }
  .select { height: 23px; border: 1px solid #e6e6e6; border-radius: 5px; box-sizing: border-box; display: flex; align-items: center; flex: none; }
  .fontsel { width: 165px; padding: 0 5px 0 6px; }
  .selv { margin-left: 7px; flex: 1; }
  .sizesel { width: 63px; margin-left: 9px; padding: 0 5px 0 12px; justify-content: space-between; }

  .stylesbody { display: flex; height: 60px; }
  .abcbox { width: 152px; height: 58px; box-sizing: border-box; border: 1px solid #eeeeee; border-radius: 7px; display: flex; align-items: center; padding-left: 11px; gap: 8px; flex: none; }
  .abc { width: 32px; height: 32px; box-sizing: border-box; border: 2px solid #8c8c8c; border-radius: 7px; text-align: center; line-height: 28px; color: #8c8c8c; font-size: 12px; flex: none; }
  .abcscroll { margin-left: 11px; height: 48px; display: flex; flex-direction: column; justify-content: space-between; align-items: center; width: 8px; }
  .up3 { border: 3px solid transparent; border-bottom: 4px solid #666; border-top: 0; }
  .dn3 { border: 3px solid transparent; border-top: 4px solid #666; border-bottom: 0; }
  .bar3 { box-shadow: 0 -2px 0 -1px #666; }
  .stylecol { margin-left: 17px; display: flex; flex-direction: column; color: #b4b4b4; }
  .scitem { height: 20px; display: flex; align-items: center; }
  .scitem span { margin-left: 4px; padding-bottom: 2px; }

  .replace { display: flex; flex-direction: column; align-items: center; color: #b4b4b4; padding-top: 2px; }
  .rt { line-height: 15px; position: relative; }
  .replace :global(svg) { margin-bottom: 2px; }
  .far { position: absolute; left: 44px; top: 6px; }

  /* main */
  .main { flex: 1; display: flex; min-height: 0; }
  .rail { width: 50px; box-sizing: border-box; border-right: 1px solid #eeeeee; padding-right: 5px; flex: none; display: flex; flex-direction: column; align-items: center; color: #333; }
  .railtop { height: 40px; display: flex; align-items: center; justify-content: center; }
  .railitem { height: 60px; display: flex; flex-direction: column; align-items: center; font-size: 9.500px; line-height: 14px; letter-spacing: 0; }
  .railicon { width: 32px; height: 32px; border-radius: 7px; display: flex; align-items: center; justify-content: center; }
  .railitem.active { color: #0a7cff; }
  .railitem.active .railicon { background: #e6f2ff; }

  .panel { width: 245px; box-sizing: border-box; border-right: 1px solid #eeeeee; flex: none; display: flex; flex-direction: column; }
  .phead { height: 48px; display: flex; align-items: center; justify-content: space-between; padding: 0 16px; flex: none; }
  .ai { display: flex; align-items: center; gap: 3px; color: #0a7cff; }
  .psearch { margin: 0 16px; height: 32px; box-sizing: border-box; border: 1px solid #e8e8e8; border-radius: 7px; display: flex; align-items: center; padding-left: 9px; gap: 7px; color: #b0b0b0; flex: none; }
  .pcollapse { height: 45px; box-sizing: border-box; padding: 4px 16px 0; display: flex; align-items: center; justify-content: space-between; border-bottom: 1px solid #eeeeee; flex: none; }
  .pc { display: flex; align-items: center; gap: 0; }
  .mg { margin-left: 5px; }
  .pc :global(svg:first-child) { margin-left: -1px; }
  .plist { position: relative; flex: 1; min-height: 0; overflow: hidden; padding: 3px 0 0 16px; }
  .lib { height: 32px; display: flex; align-items: center; white-space: nowrap; }
  .tri { width: 0; height: 0; border: 3.5px solid transparent; border-left: 4px solid #666; border-right: 0; margin: 0 7px 0 1px; }
  .tri.open { border: 3.5px solid transparent; border-top: 4px solid #666; border-bottom: 0; margin: 0 6px 0 0; }
  .tilegrid { display: grid; grid-template-columns: repeat(4, 40px); gap: 8px; margin-top: 5px; }
  .tile { width: 40px; height: 40px; background: #f5f6fa; border-radius: 7px; }
  .tilesvg { display: block; fill: none; overflow: visible; font-family: "Liberation Sans", sans-serif; letter-spacing: 0; }
  .pscroll { position: absolute; right: 2px; top: 0; width: 6px; height: 205px; background: #dfe0e3; border-radius: 3px; }
  .pfoot { height: 56px; box-sizing: border-box; border-top: 1px solid #eeeeee; padding: 12px 16px 0; flex: none; }
  .morebtn { height: 32px; line-height: 32px; text-align: center; color: #fff; background: #0a7cff; border-radius: 6px; letter-spacing: 0; }

  /* work area */
  .work { width: 790px; flex: none; display: flex; flex-direction: column; }
  .rulers { display: grid; grid-template-columns: 17px 759px 14px; grid-template-rows: 17px 519px 14px; }
  .rtop, .rleft { display: block; background: #fff; }
  .tk { stroke: #d9d9d9; }
  .rt-txt { font-size: 9.500px; fill: #808080; font-family: "Noto Sans", sans-serif; letter-spacing: 0; }
  .canvas { position: relative; background: #ebebf0; overflow: hidden; }
  .sheet { display: block; }
  .gridl line { stroke: #f0f0f0; }
  .gridl line.maj { stroke: #e4e4e4; stroke-width: 1.200; }
  .gbox { fill: none; stroke: #dddddd; stroke-width: 1.500; }
  .chip { fill: #a3ecff; stroke: #2b2b2b; stroke-width: 3; }
  .wire { fill: none; stroke: #000; stroke-width: 3.6; }
  .wire.thin { stroke-width: 3; }
  .res { fill: none; stroke: #ea9a9a; stroke-width: 3; }
  .dot { fill: #000; }
  .gnd { stroke: #222; stroke-width: 3; }
  .gndf { fill: #3a3a3a; }
  .blue { fill: none; stroke: #3f68a8; stroke-width: 3; }
  .blue.wide { stroke-width: 4; }
  .bluebox { fill: #fff; stroke: #3f68a8; stroke-width: 3; }
  .bluedot { fill: #3f68a8; }
  .batl { stroke: #999; stroke-width: 4; }
  .batd { stroke: #555; stroke-width: 4; }
  .disp { fill: #fff; stroke: #7d97c4; stroke-width: 4; }
  .seg { fill: #2f5b9c; stroke: #16243c; stroke-width: 2; }
  .t { font-family: "Liberation Sans", sans-serif; font-size: 13.500px; fill: #333; letter-spacing: 0; }
  .title { font-size: 17.500px; font-weight: 700; }
  .chipt { font-size: 16px; font-weight: 700; }
  .fab { position: absolute; right: 17px; bottom: 17px; width: 89px; height: 40px; border-radius: 20px; background: #fff; box-shadow: 0 2px 10px rgba(60, 60, 90, .16); display: flex; align-items: center; justify-content: center; }
  .fabi { display: block; margin: 0 9px; }
  .fabsep { width: 1px; height: 24px; background: #eeeeee; }
  .fs { fill: none; stroke: #6a5cff; stroke-width: 2; }
  .ff { fill: #6a5cff; }
  .vthumb { width: 10px; height: 371px; margin: 59px 0 0 2px; background: #d0d1d3; border-radius: 5px; }
  .hthumb { width: 438px; height: 10px; margin: 2px 0 0 147px; background: #d0d1d3; border-radius: 5px; }

  .colorbar { height: 17px; border-top: 1px solid #eeeeee; display: flex; align-items: center; box-sizing: border-box; }
  .cbicon { width: 35px; display: flex; align-items: center; justify-content: center; color: #444; padding-left: 4px; box-sizing: border-box; }
  .cbicon .caret { margin-left: 1px; }
  .swatches { display: grid; grid-template-columns: repeat(90, 8.36px); }
  .sw { width: 7.500px; height: 15px; border-radius: 2px; }

  .rrail { width: 37px; box-sizing: border-box; border-left: 1px solid #eeeeee; border-right: 1px solid #eeeeee; flex: none; display: flex; flex-direction: column; align-items: stretch; color: #333; }
  .rr-top { height: 32px; display: flex; align-items: center; justify-content: center; }
  .rr-blue { height: 35px; background: #0a7cff; color: #fff; display: flex; align-items: center; justify-content: center; }
  .rr-help { height: 20px; margin-top: 17px; display: flex; justify-content: center; }
  .rr-gear { margin-top: auto; margin-bottom: 6px; height: 20px; display: flex; justify-content: center; }

  .rpanel { flex: 1; min-width: 0; overflow: hidden; }
  .rtabs { display: grid; grid-template-columns: repeat(3, 79.500px); height: 33px; box-sizing: border-box; border-bottom: 1px solid #eeeeee; line-height: 33px; text-align: center; font-size: 12.500px; letter-spacing: 0; color: #333; white-space: nowrap; }
  .rtabs .on { color: #0a7cff; font-weight: 700; }
  .radios { padding: 7px 0 0 21px; }
  .radio { height: 32px; display: flex; align-items: center; color: #b8b8b8; gap: 9px; }
  .dotr { width: 14px; height: 14px; box-sizing: border-box; border-radius: 50%; background: #f2f2f2; border: 1px solid #e6e6e6; flex: none; }
  .dotr.sel { background: #fff; border: 4px solid #e0e0e0; }

  /* status bar */
  .status { height: 29px; background: #f2f3f8; display: flex; align-items: flex-end; flex: none; color: #333; }
  .st { height: 25px; display: flex; align-items: center; justify-content: center; flex: none; box-sizing: border-box; }
  .s-side { width: 43px; border-right: 1px solid #e2e3e8; }
  .s-page { width: 129px; justify-content: space-between; padding: 0 12px 0 16px; border-right: 1px solid #e2e3e8; }
  .s-plus { width: 41px; border-right: 1px solid #e2e3e8; }
  .s-cur { width: 73px; color: #0a7cff; font-weight: 600; border-right: 1px solid #e2e3e8; letter-spacing: 0; }
  .s-num { margin-left: auto; width: 143px; border-left: 1px solid #e2e3e8; border-right: 1px solid #e2e3e8; white-space: nowrap; letter-spacing: -0.3px; }
  .s-lay { width: 48px; padding-left: 4px; }
  .s-foc { width: 26px; }
  .s-foct { width: 44px; justify-content: flex-start; padding-left: 4px; }
  .s-play { width: 22px; }
  .s-minus { width: 30px; margin-left: 10px; border-left: 1px solid #e2e3e8; }
  .s-slide { width: 100px; padding: 0 2px; justify-content: flex-start; }
  .sl-a { width: 5px; height: 3px; background: #333; }
  .sl-k { width: 12px; height: 12px; box-sizing: border-box; border: 2.500px solid #333; background: #fff; border-radius: 50%; flex: none; }
  .sl-b { flex: 1; height: 3px; background: #fff; }
  .s-plus2 { width: 30px; }
  .s-pct { width: 40px; }
  .s-car { width: 17px; }
  .s-fit { width: 41px; border-left: 1px solid #e2e3e8; }
  .s-wid { width: 30px; padding-right: 6px; }
</style>
